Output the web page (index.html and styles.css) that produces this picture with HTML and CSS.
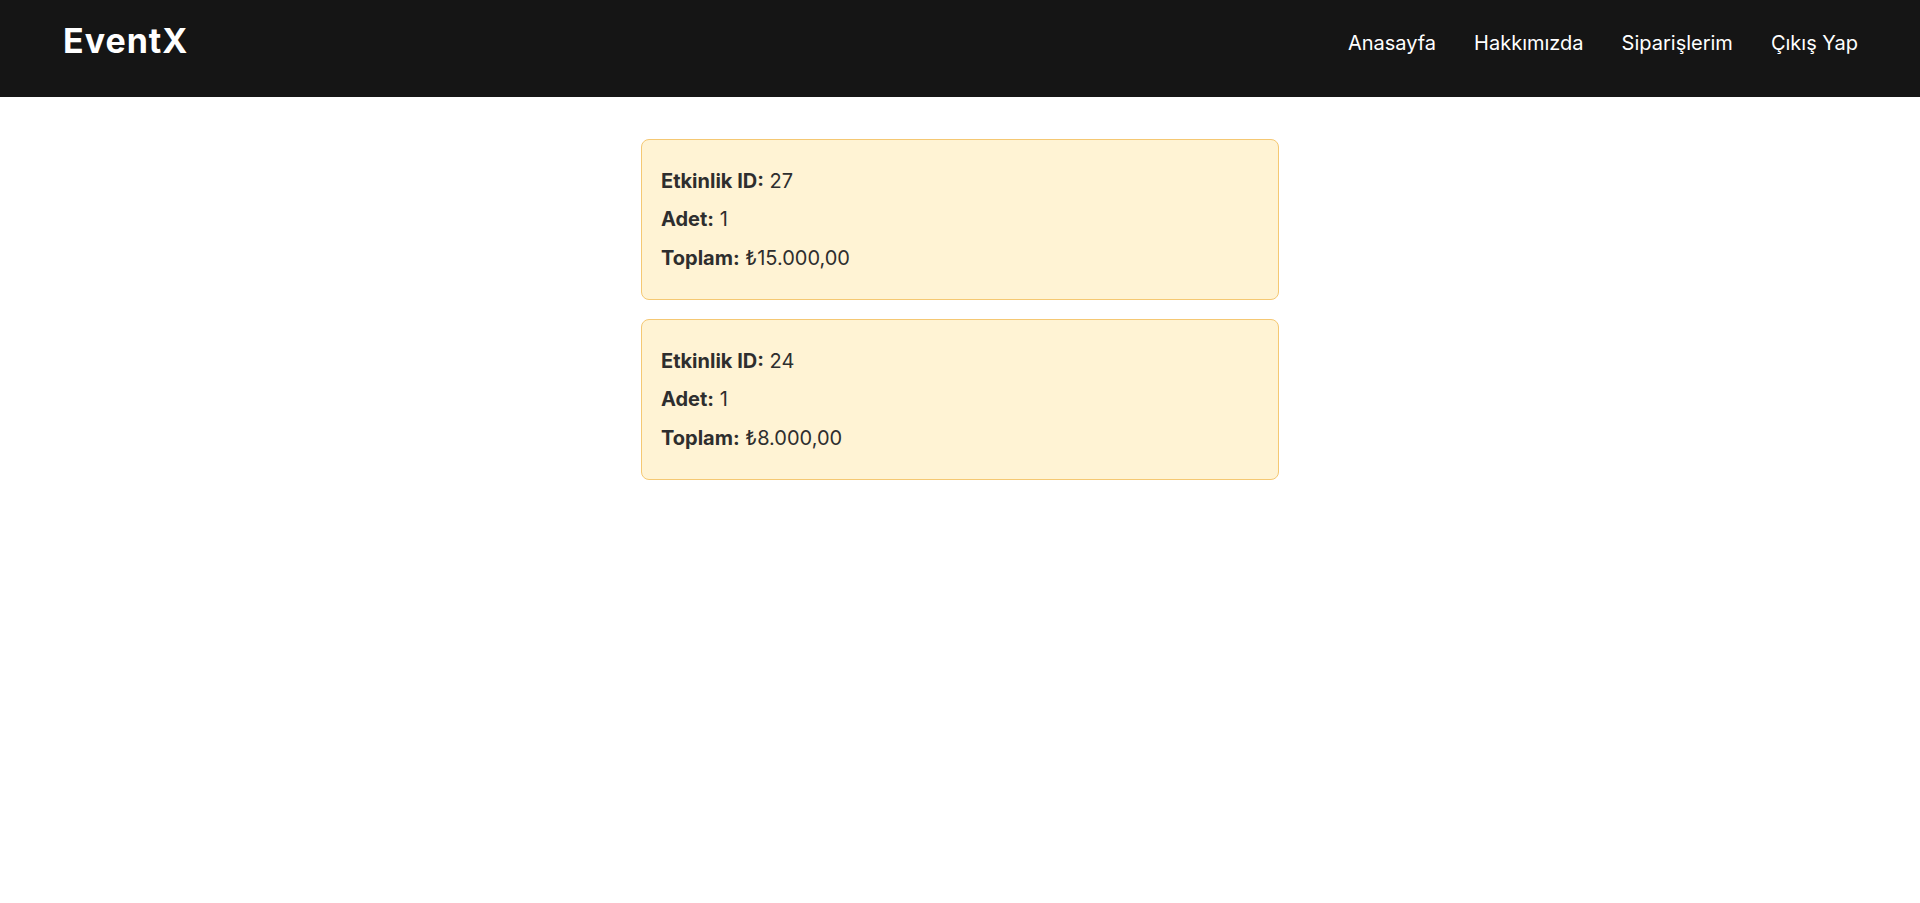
FILE: index.html
```html
<!DOCTYPE html>
<html lang="tr">
<head>
<meta charset="utf-8">
<title>EventX - Siparişlerim</title>
<link rel="stylesheet" href="styles.css">
</head>
<body>
<header class="topbar">
  <div class="logo">EventX</div>
  <nav class="nav">
    <a href="#">Anasayfa</a>
    <a href="#">Hakkımızda</a>
    <a href="#">Siparişlerim</a>
    <a href="#">Çıkış Yap</a>
  </nav>
</header>
<main class="orders">
  <div class="order-card">
    <p><strong>Etkinlik ID:</strong> 27</p>
    <p><strong>Adet:</strong> 1</p>
    <p><strong>Toplam:</strong> ₺15.000,00</p>
  </div>
  <div class="order-card">
    <p><strong>Etkinlik ID:</strong> 24</p>
    <p><strong>Adet:</strong> 1</p>
    <p><strong>Toplam:</strong> ₺8.000,00</p>
  </div>
</main>
</body>
</html>
```
FILE: styles.css
```css
* { box-sizing: border-box; }
html, body {
  margin: 0;
  padding: 0;
  background: #ffffff;
  font-family: Inter, "Noto Sans", sans-serif;
}
.topbar {
  height: 97px;
  background: #151515;
  display: flex;
  justify-content: space-between;
  align-items: flex-start;
  padding: 20px 62px 0 63px;
}
.logo {
  color: #ffffff;
  font-size: 34px;
  font-weight: 700;
  letter-spacing: 1px;
  line-height: normal;
}
.nav {
  display: flex;
  gap: 38px;
  margin-top: 11px;
}
.nav a {
  color: #ffffff;
  text-decoration: none;
  font-size: 20px;
  font-weight: 400;
  line-height: normal;
}
.orders {
  width: 638px;
  margin: 0 auto;
  padding-top: 42px;
  display: flex;
  flex-direction: column;
  gap: 19px;
}
.order-card {
  background: #fff3d4;
  border: 1px solid #f5c873;
  border-radius: 8px;
  padding: 17px 19px 18px;
  color: #2e2e2e;
}
.order-card p {
  margin: 8.5px 0;
  font-size: 20px;
  line-height: 30px;
}
.order-card strong {
  font-weight: 700;
}
```
